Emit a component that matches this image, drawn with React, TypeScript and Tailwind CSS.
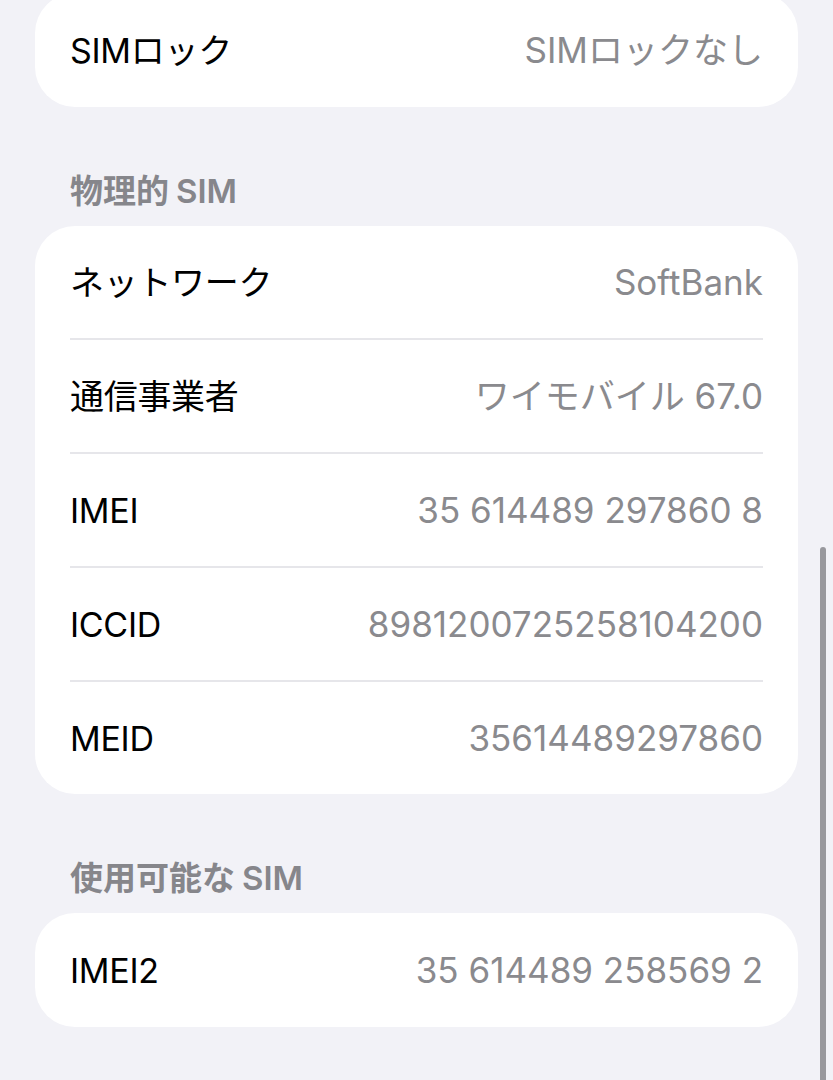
import React from "react";

const font = { fontFamily: 'Inter, "Noto Sans CJK JP", sans-serif' };

function Row({ label, value }: { label: string; value: string }) {
  return (
    <div className="h-[112px] flex items-center justify-between">
      <span className="text-[34px] text-black tracking-[-0.3px]">{label}</span>
      <span className="text-[35px] text-[#8a8a8e]">{value}</span>
    </div>
  );
}

function Divider() {
  return <div className="h-[2px] bg-[#e6e6ea]" />;
}

function Header({ text }: { text: string }) {
  return (
    <div className="h-[119px] flex items-end pb-[15px] px-[35px]">
      <span className="text-[33px] leading-[40px] font-semibold text-[#86868b]">
        {text}
        <span className="ml-[7px]">SIM</span>
      </span>
    </div>
  );
}

export default function App() {
  const sim = [
    ["ネットワーク", "SoftBank"],
    ["通信事業者", "ワイモバイル 67.0"],
    ["IMEI", "35 614489 297860 8"],
    ["ICCID", "8981200725258104200"],
    ["MEID", "35614489297860"],
  ];
  return (
    <div className="relative h-[1080px] overflow-hidden bg-[#f2f2f7] px-[35px]" style={font}>
      <div className="-mt-[7px] bg-white rounded-[40px] px-[35px] h-[114px] flex items-center">
        <div className="w-full">
          <Row label="SIMロック" value="SIMロックなし" />
        </div>
      </div>
      <Header text="物理的" />
      <div className="bg-white rounded-[40px] px-[35px]">
        {sim.map(([l, v], i) => (
          <React.Fragment key={l}>
            {i > 0 && <Divider />}
            <Row label={l} value={v} />
          </React.Fragment>
        ))}
      </div>
      <Header text="使用可能な" />
      <div className="bg-white rounded-[40px] px-[35px] h-[114px] flex items-center">
        <div className="w-full">
          <Row label="IMEI2" value="35 614489 258569 2" />
        </div>
      </div>
      <div className="absolute right-[7px] top-[547px] w-[6px] h-[600px] rounded-full bg-[#98989d]" />
    </div>
  );
}
